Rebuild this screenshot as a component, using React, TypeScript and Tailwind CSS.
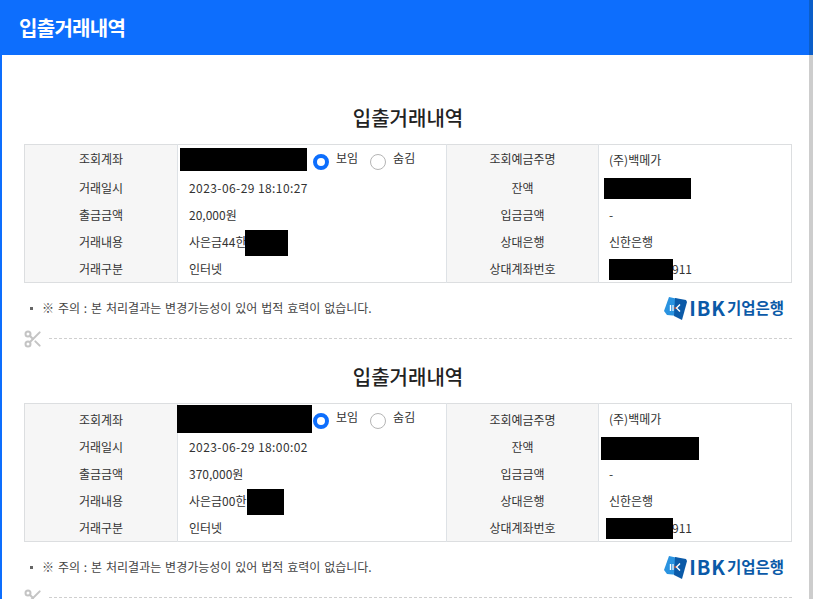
import React from 'react'
import { Scissors } from 'lucide-react'

const IbkLogo = () => (
  <div className="flex items-center">
    <svg width="23" height="24" viewBox="0 0 23 24" className="mr-[2px]">
      <path d="M0 15 L5 1 L14 3 L14 20 L3 19 Z" fill="#2a93e0" />
      <path d="M11 2 L22 4 L23 6 L18 24 L10 20 Z" fill="#0b5aa8" />
      <path d="M6.5 9 L6.5 15" stroke="#fff" strokeWidth="1.4" />
      <path d="M9 9 L9 15" stroke="#fff" strokeWidth="1.2" />
      <path d="M16 8.5 L12.5 12 L16 15.5" stroke="#fff" strokeWidth="1.4" fill="none" />
      <path d="M10.5 10.5 L12.5 12 L10.5 13.5 Z" fill="#e8562a" />
    </svg>
    <span className="text-[20px] font-bold leading-none text-[#0b5aa8] tracking-[0.9px]">IBK</span>
    <span className="ml-[1px] text-[15.5px] font-bold leading-none text-[#0b5aa8]">기업은행</span>
  </div>
)

const Radio = ({ on, label }: { on?: boolean; label: string }) => (
  <label className="flex items-center gap-[7px]">
    {on ? (
      <span className="mt-[5px] h-4 w-4 rounded-full border-[4px] border-[#0d6efd] bg-white" />
    ) : (
      <span className="mt-[5px] h-4 w-4 rounded-full border border-[#b5b5b5] bg-white" />
    )}
    <span className="mb-[3px]">{label}</span>
  </label>
)

type Receipt = {
  date: string
  out: string
  memo: string
  acct: [number, number, number]
  balance: [number, number, number]
  memoBox: [number, number]
  toBox: [number, number]
  first: string
}

const Receipt = ({ r }: { r: Receipt }) => {
  const th = 'border-r border-[#dee2e6] bg-[#f6f6f6] text-center font-normal'
  const td = 'relative pl-[11px] text-left'
  const tdRight = 'relative pl-[10px] text-left'
  return (
    <section>
      <h2 className="text-center text-[20px] font-medium leading-[30px] text-[#222]">입출거래내역</h2>
      <table className="mt-[11px] w-full table-fixed border border-[#dcdee0] text-[12px] text-[#333]">
        <colgroup>
          <col className="w-[153px]" />
          <col className="w-[269px]" />
          <col className="w-[152px]" />
          <col />
        </colgroup>
        <tbody>
          <tr className={r.first}>
            <th className={th}>조회계좌</th>
            <td className="border-r border-[#dee2e6] pl-[2px]">
              <div className="flex items-center">
                <div className="w-[133px] shrink-0">
                  <div className="bg-black" style={{ width: r.acct[0], height: r.acct[1], marginLeft: r.acct[2] }} />
                </div>
                <div className="flex gap-[12px]">
                  <Radio on label="보임" />
                  <Radio label="숨김" />
                </div>
              </div>
            </td>
            <th className={th}>조회예금주명</th>
            <td className={tdRight}>(주)백메가</td>
          </tr>
          <tr className="h-[27px]">
            <th className={th}>거래일시</th>
            <td className={td + ' border-r border-[#dee2e6] tracking-[0.42px]'}>{r.date}</td>
            <th className={th}>잔액</th>
            <td className={tdRight}>
              <span
                className="absolute top-[3px] bg-black"
                style={{ left: r.balance[2], width: r.balance[0], height: r.balance[1] }}
              />
            </td>
          </tr>
          <tr className="h-[27px]">
            <th className={th}>출금금액</th>
            <td className={td + ' border-r border-[#dee2e6]'}>{r.out}</td>
            <th className={th}>입금금액</th>
            <td className={tdRight}>-</td>
          </tr>
          <tr className="h-[27px]">
            <th className={th}>거래내용</th>
            <td className={td + ' border-r border-[#dee2e6]'}>
              {r.memo}
              <span
                className="absolute top-[1px] h-[26px] bg-black"
                style={{ left: r.memoBox[0], width: r.memoBox[1] }}
              />
            </td>
            <th className={th}>상대은행</th>
            <td className={tdRight}>신한은행</td>
          </tr>
          <tr className="h-[27px]">
            <th className={th}>거래구분</th>
            <td className={td + ' border-r border-[#dee2e6]'}>인터넷</td>
            <th className={th}>상대계좌번호</th>
            <td className={tdRight}>
              <span className="pl-[63px]">911</span>
              <span
                className="absolute top-[3px] h-[21px] bg-black"
                style={{ left: r.toBox[0], width: r.toBox[1] }}
              />
            </td>
          </tr>
        </tbody>
      </table>
      <div className="mt-[11px] flex h-[28px] items-center justify-between pl-[6px] pr-[8px] text-[12px] text-[#444]">
        <div className="flex items-center gap-[9px]">
          <span className="h-[3px] w-[3px] bg-[#666]" />
          <span className="[word-spacing:1.2px]">※ 주의 : 본 처리결과는 변경가능성이 있어 법적 효력이 없습니다.</span>
        </div>
        <IbkLogo />
      </div>
      <div className="mt-[7px] flex h-[19px] items-center">
        <Scissors className="-ml-[1px] h-[20px] w-[20px] text-[#c4c4c4]" strokeWidth={2.4} />
        <div className="ml-[6px] flex-1 border-t border-dashed border-[#cfcfcf]" />
      </div>
    </section>
  )
}

const data: Receipt[] = [
  {
    date: '2023-06-29 18:10:27',
    out: '20,000원',
    memo: '사은금44한',
    acct: [127, 23, 0],
    balance: [87, 21, 5],
    memoBox: [67, 43],
    toBox: [10, 64],
    first: 'h-[30px] [&>th]:pb-[2px]',
  },
  {
    date: '2023-06-29 18:00:02',
    out: '370,000원',
    memo: '사은금00한',
    acct: [135, 28, -3],
    balance: [98, 23, 2],
    memoBox: [69, 37],
    toBox: [7, 67],
    first: 'h-[30px] [&>th]:pt-[2px]',
  },
]

export default function App() {
  return (
    <div className="h-screen overflow-hidden bg-white font-['Noto_Sans_CJK_KR','Noto_Sans',sans-serif]">
      <header className="flex h-[55px] items-center border-r-4 border-r-[#0b5ec9] bg-[#0d6efd] pl-[19px]">
        <h1 className="text-[20px] font-bold text-white tracking-[-0.7px]">입출거래내역</h1>
      </header>
      <main className="h-[544px] border-l-2 border-r-4 border-l-[#0d6efd] border-r-[#cdcdcd] pl-[22px] pr-[17px] pt-[48px]">
        <Receipt r={data[0]} />
        <div className="mt-[14px]">
          <Receipt r={data[1]} />
        </div>
      </main>
    </div>
  )
}
